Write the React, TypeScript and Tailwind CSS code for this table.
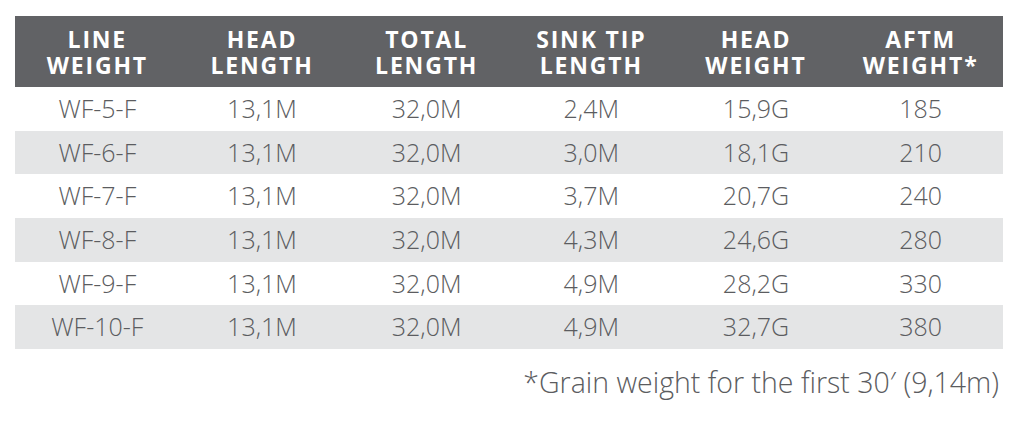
const headers: [string, string][] = [
  ["LINE", "WEIGHT"],
  ["HEAD", "LENGTH"],
  ["TOTAL", "LENGTH"],
  ["SINK TIP", "LENGTH"],
  ["HEAD", "WEIGHT"],
  ["AFTM", "WEIGHT*"],
];

const rows: string[][] = [
  ["WF-5-F", "13,1M", "32,0M", "2,4M", "15,9G", "185"],
  ["WF-6-F", "13,1M", "32,0M", "3,0M", "18,1G", "210"],
  ["WF-7-F", "13,1M", "32,0M", "3,7M", "20,7G", "240"],
  ["WF-8-F", "13,1M", "32,0M", "4,3M", "24,6G", "280"],
  ["WF-9-F", "13,1M", "32,0M", "4,9M", "28,2G", "330"],
  ["WF-10-F", "13,1M", "32,0M", "4,9M", "32,7G", "380"],
];

export default function App() {
  return (
    <div className="w-[1024px] h-[425px] bg-white pt-[16px] pl-[15px] font-['Open_Sans',sans-serif] text-[#5b5c60]">
      <div className="w-[988px]">
        <div className="grid grid-cols-6 h-[71px] bg-[#616265] text-white font-bold text-[23px] leading-[26px] tracking-[0.08em] items-center">
          {headers.map(([a, b], i) => (
            <div key={i} className="text-center">
              {a}
              <br />
              {b}
            </div>
          ))}
        </div>
        {rows.map((r, i) => (
          <div
            key={i}
            className={
              "grid grid-cols-6 h-[43.67px] items-center text-[25px] font-light " +
              (i % 2 === 1 ? "bg-[#e4e5e6]" : "bg-white")
            }
          >
            {r.map((c, j) => (
              <div key={j} className="text-center">
                {c}
              </div>
            ))}
          </div>
        ))}
      </div>
      <div className="w-[984px] text-right text-[28.5px] font-light mt-[12px]">
        *Grain weight for the first 30′ (9,14m)
      </div>
    </div>
  );
}
